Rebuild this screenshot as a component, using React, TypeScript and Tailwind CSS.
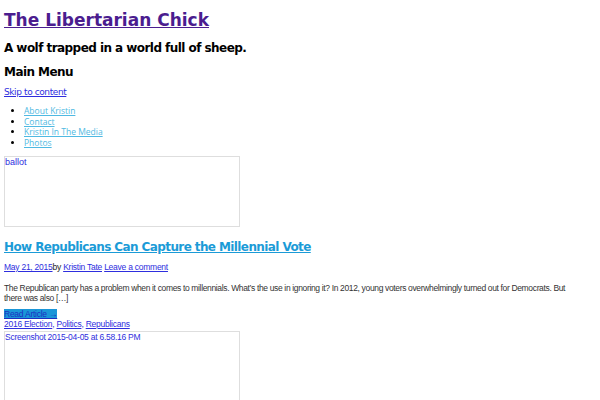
import React from "react";

export default function App() {
  const dv = { fontFamily: '"DejaVu Sans", sans-serif' };
  const body = { fontFamily: '"Liberation Sans", Arial, sans-serif' };
  const menu = { fontFamily: '"Open Sans", "Noto Sans", sans-serif' };
  return (
    <div className="w-[600px] h-[400px] overflow-hidden bg-white px-[4px] pt-[10px]" style={dv}>
      <h1 className="text-[17px] leading-[20px] font-bold">
        <a href="#" className="text-[#4b1d8f] underline">The Libertarian Chick</a>
      </h1>
      <h2 className="mt-[11px] text-[12px] leading-[14px] font-bold tracking-[-0.55px] text-black">
        A wolf trapped in a world full of sheep.
      </h2>
      <h3 className="mt-[10px] text-[12px] leading-[14px] font-bold tracking-[-0.55px] text-black">Main Menu</h3>
      <a href="#" className="block mt-[8px] text-[9px] leading-[11px] tracking-[-0.4px] text-[#2e2ede] underline">
        Skip to content
      </a>
      <ul
        className="mt-[8px] pl-[20px] list-disc marker:text-black text-[8.5px] leading-[10.5px] font-normal text-[#4fb9e2]"
        style={menu}
      >
        <li><a href="#" className="underline">About Kristin</a></li>
        <li><a href="#" className="underline">Contact</a></li>
        <li><a href="#" className="underline">Kristin In The Media</a></li>
        <li><a href="#" className="underline">Photos</a></li>
      </ul>
      <div
        className="mt-[8px] w-[236px] h-[71px] border border-[#dedede] text-[9px] leading-[10px] text-[#2e2ede]"
        style={body}
      >
        ballot
      </div>
      <h2 className="mt-[13px] text-[12px] leading-[14px] font-bold tracking-[-0.6px]">
        <a href="#" className="text-[#1b9bd7] underline">How Republicans Can Capture the Millennial Vote</a>
      </h2>
      <div className="mt-[8px] text-[8.5px] leading-[11px] tracking-[-0.25px] text-[#222]" style={body}>
        <a href="#" className="text-[#2e2ede] underline">May 21, 2015</a>by{" "}
        <a href="#" className="text-[#2e2ede] underline">Kristin Tate</a>{" "}
        <a href="#" className="text-[#2e2ede] underline">Leave a comment</a>
      </div>
      <p className="mt-[10px] w-[570px] text-[8.5px] leading-[10px] tracking-[-0.35px] text-[#333]" style={body}>
        The Republican party has a problem when it comes to millennials. What’s the use in ignoring it? In 2012, young voters overwhelmingly turned out for Democrats. But there was also […]
      </p>
      <div className="mt-[7px] text-[8.5px] leading-[9px] tracking-[-0.25px]" style={body}>
        <a href="#" className="bg-[#1a96d8] text-[#1c2fc0] underline">Read Article →</a>
      </div>
      <div className="text-[8.5px] leading-[11px] tracking-[-0.25px] text-[#2e2ede]" style={body}>
        <a href="#" className="underline">2016 Election</a>, <a href="#" className="underline">Politics</a>,{" "}
        <a href="#" className="underline">Republicans</a>
      </div>
      <div
        className="mt-[1px] w-[236px] h-[71px] border border-[#dedede] text-[8.5px] leading-[10px] tracking-[-0.25px] text-[#2e2ede]"
        style={body}
      >
        Screenshot 2015-04-05 at 6.58.16 PM
      </div>
    </div>
  );
}
